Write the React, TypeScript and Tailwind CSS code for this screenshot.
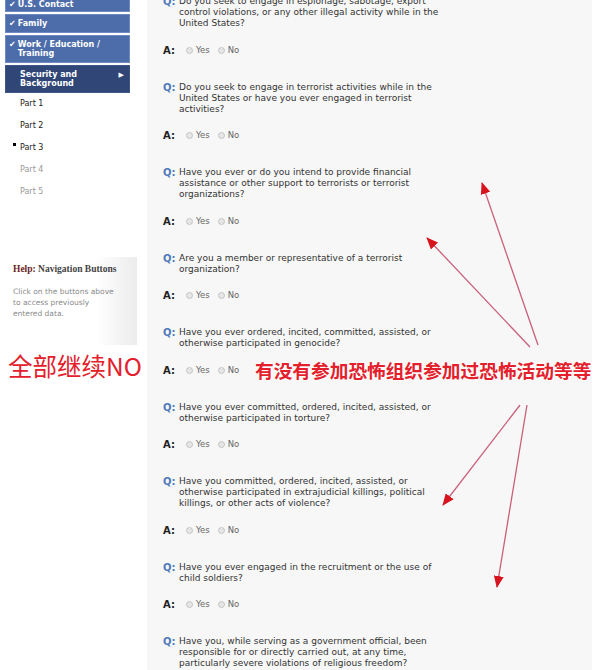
const navDone = [
  { label: ["U.S. Contact"], h: "h-[17px] -mt-[5px]" },
  { label: ["Family"], h: "h-[19px]" },
  { label: ["Work / Education /", "Training"], h: "h-[28px]" },
];

const parts = [
  { name: "Part 1", active: true },
  { name: "Part 2", active: true },
  { name: "Part 3", active: true, current: true },
  { name: "Part 4", active: false },
  { name: "Part 5", active: false },
];

const questions: string[][] = [
  ["Do you seek to engage in espionage, sabotage, export", "control violations, or any other illegal activity while in the", "United States?"],
  ["Do you seek to engage in terrorist activities while in the", "United States or have you ever engaged in terrorist", "activities?"],
  ["Have you ever or do you intend to provide financial", "assistance or other support to terrorists or terrorist", "organizations?"],
  ["Are you a member or representative of a terrorist", "organization?"],
  ["Have you ever ordered, incited, committed, assisted, or", "otherwise participated in genocide?"],
  ["Have you ever committed, ordered, incited, assisted, or", "otherwise participated in torture?"],
  ["Have you committed, ordered, incited, assisted, or", "otherwise participated in extrajudicial killings, political", "killings, or other acts of violence?"],
  ["Have you ever engaged in the recruitment or the use of", "child soldiers?"],
  ["Have you, while serving as a government official, been", "responsible for or directly carried out, at any time,", "particularly severe violations of religious freedom?"],
];

const verdana = "font-['DejaVu_Sans',Verdana,sans-serif]";

const Radio = ({ label }: { label: string }) => (
  <span className="flex items-center gap-[3px]">
    <span className="w-[7px] h-[7px] rounded-full border border-[#c4c4c4] bg-[#e6e6e6]" />
    <span className="text-[8.5px] text-[#666]">{label}</span>
  </span>
);

const Arrows = () => (
  <svg className="absolute inset-0 pointer-events-none" width="614" height="670">
    <defs>
      <marker id="ah" markerWidth="12" markerHeight="10" refX="11" refY="5" orient="auto" markerUnits="userSpaceOnUse">
        <path d="M0,0 L12,5 L0,10 Z" fill="#d8141e" />
      </marker>
    </defs>
    <g stroke="#c9607a" strokeWidth="1.3" fill="none">
      <line x1="538" y1="345" x2="482" y2="183" markerEnd="url(#ah)" />
      <line x1="530" y1="347" x2="427" y2="238" markerEnd="url(#ah)" />
      <line x1="520" y1="405" x2="443" y2="505" markerEnd="url(#ah)" />
      <line x1="527" y1="405" x2="497" y2="587" markerEnd="url(#ah)" />
    </g>
  </svg>
);

export default function App() {
  return (
    <div className={`relative w-[614px] h-[670px] overflow-hidden bg-white flex ${verdana}`}>
      {/* Sidebar */}
      <div className="w-[147px] shrink-0 flex flex-col">
        <div className="ml-[5px] w-[125px] flex flex-col gap-[2px]">
          {navDone.map((n) => (
            <div
              key={n.label[0]}
              className={`${n.h} bg-[#4d6daa] border border-[#6f8cc2] flex items-center pl-[3px] text-white text-[8px] font-bold leading-[9px]`}
            >
              <span className="self-start mt-[4px] mr-[2px] text-[8px]">✔</span>
              <span className="self-start mt-[4px]">
                {n.label.map((l) => (
                  <span key={l} className="block">{l}</span>
                ))}
              </span>
            </div>
          ))}
          <div className="h-[28px] bg-[#2f4676] border border-[#3f5688] flex justify-between pl-[14px] pr-[5px] pt-[4px] text-white text-[8px] font-bold leading-[9px]">
            <span>
              <span className="block">Security and</span>
              <span className="block">Background</span>
            </span>
            <span className="text-[7px] mt-[1px]">▶</span>
          </div>
        </div>

        <div className="mt-[6px] flex flex-col gap-[12px]">
          {parts.map((p) => (
            <div key={p.name} className="relative pl-[20px] h-[10px] leading-[10px] text-[8px]">
              {p.current && <span className="absolute left-[13px] top-[0px] w-[3px] h-[3px] bg-black" />}
              <span className={p.active ? "text-[#222]" : "text-[#999]"}>{p.name}</span>
            </div>
          ))}
        </div>

        <div className="mt-[60px] w-[137px] h-[88px] bg-gradient-to-r from-white from-70% to-[#ececec] pl-[13px] pt-[6px]">
          <div className="font-['Liberation_Serif',serif] font-bold text-[9.5px] leading-[12px] text-[#444]">
            <span className="text-[#6b2222]">Help:</span> Navigation Buttons
          </div>
          <div className="mt-[11px] text-[7.5px] leading-[11px] text-[#8a8a8a]">
            <span className="block">Click on the buttons above</span>
            <span className="block">to access previously</span>
            <span className="block">entered data.</span>
          </div>
        </div>

        <div className="mt-[6px] ml-[8px] font-['Noto_Sans_CJK_SC',sans-serif] text-[24.5px] leading-[30px] text-[#e3202b] [text-shadow:0_0_3px_#fff,0_0_3px_#fff]">
          全部继续NO
        </div>
      </div>

      {/* Questions */}
      <div className="w-[445px] shrink-0 bg-[#f7f7f7] pl-[16px] -mt-[4px]">
        {questions.map((lines, i) => (
          <div key={i} className="mb-[25.5px]">
            <div className="flex">
              <span className="w-[16px] shrink-0 text-[10px] leading-[11px] font-bold text-[#5079bb]">Q:</span>
              <div className="text-[9px] leading-[11px] text-[#333]">
                {lines.map((l) => (
                  <span key={l} className="block whitespace-nowrap">{l}</span>
                ))}
              </div>
            </div>
            <div className="mt-[15px] h-[12px] flex items-center">
              <span className="w-[23px] text-[10px] font-bold text-[#222]">A:</span>
              <div className="flex items-center gap-[8px]">
                <Radio label="Yes" />
                <Radio label="No" />
              </div>
            </div>
          </div>
        ))}
      </div>
      <div className="flex-1 bg-white" />

      <div className="absolute left-[255px] top-[358px] font-['Noto_Sans_CJK_SC',sans-serif] font-bold text-[18.7px] leading-[24px] text-[#e3202b] whitespace-nowrap [text-shadow:0_0_3px_#fff,0_0_3px_#fff,0_0_2px_#fff]">
        有没有参加恐怖组织参加过恐怖活动等等
      </div>
      <Arrows />
    </div>
  );
}
